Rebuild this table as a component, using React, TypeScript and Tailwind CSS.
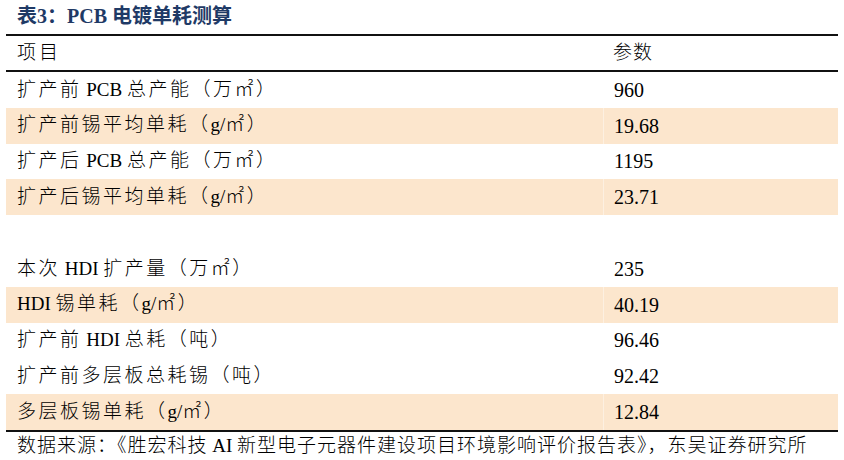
import React from "react";

const font = { fontFamily: '"Liberation Serif", "Noto Sans CJK SC", serif' };

type Row = { label: string; value: string; shaded?: boolean };

const rows: Row[] = [
  { label: "扩产前 PCB 总产能（万㎡）", value: "960" },
  { label: "扩产前锡平均单耗（g/㎡）", value: "19.68", shaded: true },
  { label: "扩产后 PCB 总产能（万㎡）", value: "1195" },
  { label: "扩产后锡平均单耗（g/㎡）", value: "23.71", shaded: true },
  { label: "", value: "" },
  { label: "本次 HDI 扩产量（万㎡）", value: "235" },
  { label: "HDI 锡单耗（g/㎡）", value: "40.19", shaded: true },
  { label: "扩产前 HDI 总耗（吨）", value: "96.46" },
  { label: "扩产前多层板总耗锡（吨）", value: "92.42" },
  { label: "多层板锡单耗（g/㎡）", value: "12.84", shaded: true },
];

// latin runs keep normal spacing, CJK gets the wider tracking
function Label({ text }: { text: string }) {
  const parts = text.split(/( ?[A-Za-z\/]+ ?)/);
  return (
    <>
      {parts.map((p, i) =>
        /[A-Za-z]/.test(p) ? (
          <span key={i} className="tracking-normal">
            {p}
          </span>
        ) : (
          <span key={i}>{p}</span>
        )
      )}
    </>
  );
}

function TableRow({ row }: { row: Row }) {
  return (
    <div className={`flex h-[35.8px] items-center ${row.shaded ? "bg-[#fce6cd]" : "bg-white"}`}>
      <div className="w-[597px] pl-[11px] text-[19px] tracking-[2.5px] font-light text-black whitespace-pre">
        <Label text={row.label} />
      </div>
      <div
        className={`flex-1 h-full flex items-center pl-[10px] text-[20px] text-black border-l ${
          row.shaded ? "border-[#fdf0e1]" : "border-white"
        }`}
      >
        {row.value}
      </div>
    </div>
  );
}

export default function App() {
  return (
    <div className="w-[844px] h-[460px] bg-white overflow-hidden" style={font}>
      <div className="h-[34px] pl-[17px] pt-[2px] text-[20px] font-bold text-[#1f3a66] leading-[28px]">
        表3：PCB 电镀单耗测算
      </div>
      <div className="mx-[6px]">
        <div className="border-t-2 border-b-2 border-[#111] flex h-[38px] items-center">
          <div className="w-[597px] pl-[11px] text-[19px] tracking-[3px] font-light">项目</div>
          <div className="flex-1 pl-[10px] text-[19px] tracking-[1px] font-light">参数</div>
        </div>
        <div className="border-b-2 border-[#111]">
          {rows.map((r, i) => (
            <TableRow key={i} row={r} />
          ))}
        </div>
        <div className="pl-[11px] pt-[2px] text-[19px] tracking-[1px] font-light leading-[24px] whitespace-nowrap">
          数据来源：《胜宏科技<span className="tracking-normal"> AI </span>新型电子元器件建设项目环境影响评价报告表》，东吴证券研究所
        </div>
      </div>
    </div>
  );
}
